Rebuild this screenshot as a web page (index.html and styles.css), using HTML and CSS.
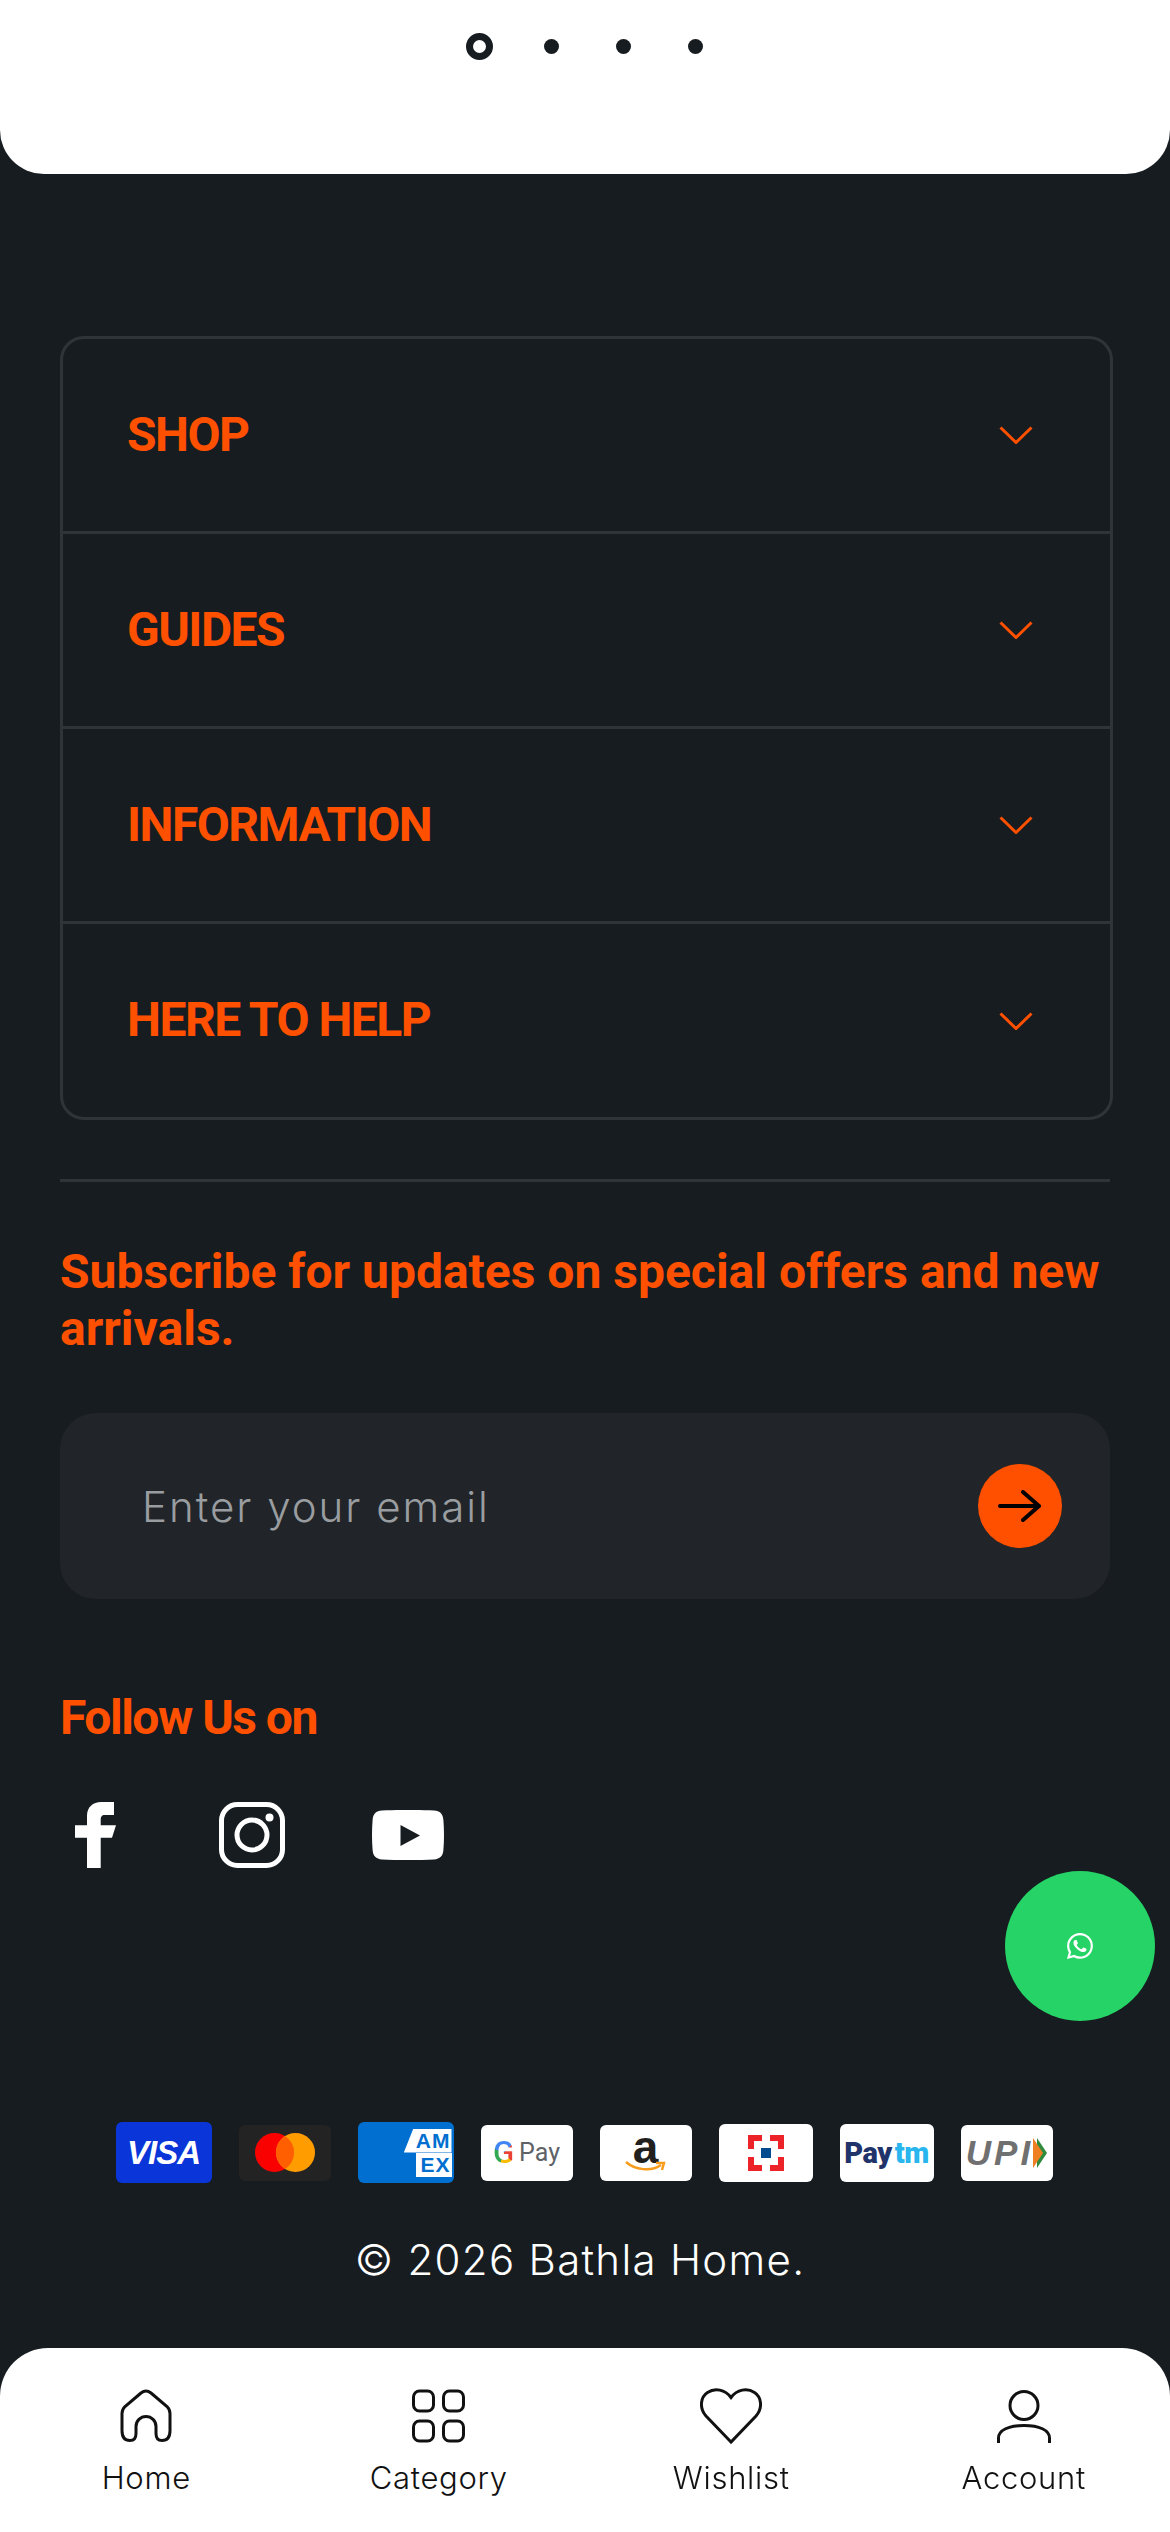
FILE: index.html
```html
<!DOCTYPE html>
<html lang="en">
<head>
    <meta charset="UTF-8">
    <meta name="viewport" content="width=device-width, initial-scale=1.0">
    <title>Bathla Home</title>
    <link rel="stylesheet" href="styles.css">
</head>
<body>

<!-- end of the white slider block -->
<div class="hero">
    <ul class="dots">
        <li class="active"><span></span></li>
        <li><span></span></li>
        <li><span></span></li>
        <li><span></span></li>
    </ul>
</div>

<footer class="footer">
    <div class="accordion">
        <div class="acc-row">
            <span>SHOP</span>
            <svg class="chev" viewBox="0 0 34 18"><path d="M1.5 1.5 L17 16.5 L32.5 1.5"/></svg>
        </div>
        <div class="acc-row">
            <span>GUIDES</span>
            <svg class="chev" viewBox="0 0 34 18"><path d="M1.5 1.5 L17 16.5 L32.5 1.5"/></svg>
        </div>
        <div class="acc-row">
            <span>INFORMATION</span>
            <svg class="chev" viewBox="0 0 34 18"><path d="M1.5 1.5 L17 16.5 L32.5 1.5"/></svg>
        </div>
        <div class="acc-row">
            <span>HERE TO HELP</span>
            <svg class="chev" viewBox="0 0 34 18"><path d="M1.5 1.5 L17 16.5 L32.5 1.5"/></svg>
        </div>
    </div>

    <div class="subscribe">
        <h3>Subscribe for updates on special offers and new arrivals.</h3>
        <div class="email-box">
            <span class="placeholder">Enter your email</span>
            <button class="send">
                <svg viewBox="0 0 44 32" width="44" height="32"><path d="M2 16 H41 M25 2 L41 16 L25 30"/></svg>
            </button>
        </div>
    </div>

    <div class="follow">
        <h3>Follow Us on</h3>
        <div class="socials">
            <svg class="fb" viewBox="0 0 41 66" width="41" height="66"><path d="M12 66 V35.7 H0 V23.3 H12 V14 C12 5 18 0 26 0 H39 V13 H30 C26.5 13 25.7 15 25.7 18 V23.3 H41 L37 35.7 H25.7 V66 Z"/></svg>
            <svg class="ig" viewBox="0 0 66 66" width="66" height="66">
                <rect x="2.5" y="2.5" width="61" height="61" rx="16"/>
                <circle cx="33" cy="33" r="15"/>
                <circle class="ig-dot" cx="50.5" cy="15.5" r="4"/>
            </svg>
            <svg class="yt" viewBox="0 0 72 50" width="72" height="50"><path fill-rule="evenodd" d="M10 0.5 C25 -0.2 47 -0.2 62 0.5 C68 0.8 71 4 71.4 10 C72.2 20 72.2 30 71.4 40 C71 46 68 49 62 49.4 C47 50.2 25 50.2 10 49.4 C4 49 1 46 0.6 40 C-0.2 30 -0.2 20 0.6 10 C1 4 4 0.8 10 0.5 Z M28.500 15 V36 L48 25.500 Z"/></svg>
        </div>
    </div>

    <div class="payments">
        <div class="pay big visa">VISA</div>
        <div class="pay mc">
            <svg viewBox="0 0 60 39" width="60" height="39">
                <circle cx="19.500" cy="19.500" r="19.500" fill="#f90101"/>
                <circle cx="40.500" cy="19.500" r="19.500" fill="#ff9c00"/>
                <path d="M30 3 A19.500 19.500 0 0 1 30 36 A19.500 19.500 0 0 1 30 3 Z" fill="#ff5f00"/>
            </svg>
        </div>
        <div class="pay big amex">
            <div class="amex-mark"><span class="am">AM</span><span class="ex">EX</span></div>
        </div>
        <div class="pay white gpay"><span class="g">G</span><span class="gp">Pay</span></div>
        <div class="pay white amazon">
            <span>a</span>
            <svg viewBox="0 0 42 14" width="42" height="14"><path d="M1 2 C10 10 26 12 36 5"/><path d="M31 3 L39 3 L37 10"/></svg>
        </div>
        <div class="pay white mid">
            <svg viewBox="0 0 36 36" width="36" height="36">
                <path fill="#ed232a" d="M0 0 H14 V6 H6 V14 H0 Z M22 0 H36 V14 H30 V6 H22 Z M0 22 H6 V30 H14 V36 H0 Z M30 22 H36 V36 H22 V30 H30 Z"/>
                <rect x="13" y="13" width="10" height="10" fill="#004c8f"/>
            </svg>
        </div>
        <div class="pay white mid paytm"><span class="p1">Pay</span><span class="p2">tm</span></div>
        <div class="pay white upi">
            <span>UPI</span>
            <svg viewBox="0 0 14 30" width="14" height="30">
                <path fill="#2e8b3d" d="M4 0 L14 15 L4 30 Z"/>
                <path fill="#ee7f22" d="M0 0 L10 15 L0 30 Z"/>
            </svg>
        </div>
    </div>

    <p class="copy">© 2026 Bathla Home.</p>
</footer>

<!-- floating whatsapp button -->
<a class="wa">
    <svg viewBox="0 0 16 16" width="26" height="26"><path d="M13.601 2.326A7.854 7.854 0 0 0 7.994 0C3.627 0 .068 3.558.064 7.926c0 1.399.366 2.76 1.057 3.965L0 16l4.204-1.102a7.933 7.933 0 0 0 3.79.965h.004c4.368 0 7.926-3.558 7.93-7.93A7.898 7.898 0 0 0 13.6 2.326zM7.994 14.521a6.573 6.573 0 0 1-3.356-.92l-.24-.144-2.494.654.666-2.433-.156-.251a6.56 6.56 0 0 1-1.007-3.505c0-3.626 2.957-6.584 6.591-6.584a6.56 6.56 0 0 1 4.66 1.931 6.557 6.557 0 0 1 1.928 4.66c-.004 3.639-2.961 6.592-6.592 6.592zm3.615-4.934c-.197-.099-1.17-.578-1.353-.646-.182-.065-.315-.099-.445.099-.133.197-.513.646-.627.775-.114.133-.232.148-.43.05-.197-.1-.836-.308-1.592-.985-.59-.525-.985-1.175-1.103-1.372-.114-.198-.011-.304.088-.403.087-.088.197-.232.296-.346.1-.114.133-.198.198-.33.065-.134.034-.248-.015-.347-.05-.099-.445-1.076-.612-1.47-.16-.389-.323-.335-.445-.34-.114-.007-.247-.007-.38-.007a.729.729 0 0 0-.529.247c-.182.198-.691.677-.691 1.654 0 .977.71 1.916.81 2.049.098.133 1.394 2.132 3.383 2.992.47.205.84.326 1.129.418.475.152.904.129 1.246.08.38-.058 1.171-.48 1.338-.943.164-.464.164-.86.114-.943-.049-.084-.182-.133-.38-.232z"/></svg>
</a>

<nav class="bottom-nav">
    <a class="nav-item">
        <svg viewBox="0 0 52 53" width="52" height="53"><path d="M21 3.500 L5 17 Q2 20 2 24 V41 Q2 51 10 51 Q16 51 16 44 V37 A10 10 0 0 1 36 37 V44 Q36 51 42 51 Q50 51 50 41 V24 Q50 20 47 17 L31 3.500 Q26 -0.500 21 3.500 Z"/></svg>
        <span>Home</span>
    </a>
    <a class="nav-item">
        <svg viewBox="0 0 53 53" width="53" height="53">
            <rect x="1.500" y="1.500" width="20" height="20" rx="6"/>
            <rect x="31.500" y="1.500" width="20" height="20" rx="6"/>
            <rect x="1.500" y="31.500" width="20" height="20" rx="6"/>
            <rect x="31.500" y="31.500" width="20" height="20" rx="6"/>
        </svg>
        <span>Category</span>
    </a>
    <a class="nav-item">
        <svg viewBox="0 0 62 56" width="62" height="56"><path d="M31 54 L6 28 C-1 20 0.500 9 7.500 4.500 C15 -0.500 25 1.500 31 9.500 C37 1.500 47 -0.500 54.500 4.500 C61.500 9 63 20 56 28 Z"/></svg>
        <span>Wishlist</span>
    </a>
    <a class="nav-item">
        <svg viewBox="0 0 54 54" width="54" height="54">
            <circle cx="27" cy="16.500" r="14"/>
            <path d="M1.500 54 V49 C1.500 41 12 36.500 27 36.500 C42 36.500 52.500 41 52.500 49 V54"/>
        </svg>
        <span>Account</span>
    </a>
</nav>

</body>
</html>
```

FILE: styles.css
```css
* {
    box-sizing: border-box;
}
html, body {
    margin: 0;
    padding: 0;
}
body {
    width: 1170px;
    height: 2532px;
    overflow: hidden;
    background-color: #171c20;
    font-family: "Roboto", "Liberation Sans", sans-serif;
}

/* slider end */
.hero {
    height: 174px;
    padding-top: 33px;
    background-color: #ffffff;
    border-radius: 0 0 44px 44px;
}
.dots {
    display: flex;
    justify-content: center;
    margin: 0;
    padding: 0 0 0 4px;
    list-style: none;
}
.dots li {
    width: 72px;
    height: 27px;
    display: flex;
    align-items: center;
    justify-content: center;
}
.dots span {
    display: block;
    width: 15px;
    height: 15px;
    border-radius: 50%;
    background-color: #171c20;
}
.dots .active span {
    width: 27px;
    height: 27px;
    background-color: #ffffff;
    border: 7px solid #171c20;
}

/* footer */
.footer {
    padding: 162px 60px 0;
}
.accordion {
    width: 1053px;
    border: 3px solid #2f3439;
    border-radius: 24px;
}
.acc-row {
    height: 195px;
    padding: 0 77px 0 64px;
    display: flex;
    align-items: center;
    justify-content: space-between;
    color: #ff5000;
    font-size: 48px;
    font-weight: 700;
    letter-spacing: -1.5px;
    border-bottom: 3px solid #2f3439;
}
.acc-row:last-child {
    border-bottom: none;
    height: 193px;
}
.acc-row span {
    margin-top: -2px;
}
.chev {
    width: 34px;
    height: 18px;
    fill: none;
    stroke: #ff5000;
    stroke-width: 3;
}

.subscribe {
    margin-top: 59px;
    padding-top: 0;
    border-top: 3px solid #2f3439;
}
.subscribe h3 {
    margin: 61px 0 0;
    color: #ff5000;
    font-size: 48px;
    line-height: 57px;
    font-weight: 700;
}
.email-box {
    height: 186px;
    margin-top: 56px;
    padding: 0 48px 0 82px;
    display: flex;
    align-items: center;
    justify-content: space-between;
    background-color: #212529;
    border-radius: 36px;
}
.placeholder {
    color: #9a9da0;
    font-family: "Inter", "Liberation Sans", sans-serif;
    font-size: 42px;
    font-weight: 300;
    letter-spacing: 2px;
}
.send {
    width: 84px;
    height: 84px;
    padding: 0;
    border: none;
    border-radius: 50%;
    background-color: #ff5000;
    display: flex;
    align-items: center;
    justify-content: center;
}
.send svg {
    fill: none;
    stroke: #000000;
    stroke-width: 4;
    stroke-linecap: round;
    stroke-linejoin: round;
}

.follow {
    margin-top: 90px;
}
.follow h3 {
    margin: 0;
    color: #ff5000;
    font-size: 48px;
    line-height: 57px;
    font-weight: 700;
    letter-spacing: -1.5px;
}
.socials {
    margin-top: 56px;
    padding-left: 15px;
    display: flex;
    align-items: center;
}
.socials svg {
    display: block;
}
.fb {
    fill: #ffffff;
}
.ig {
    margin-left: 103px;
    fill: none;
    stroke: #ffffff;
    stroke-width: 5;
}
.ig .ig-dot {
    fill: #ffffff;
    stroke: none;
}
.yt {
    margin-left: 87px;
    fill: #ffffff;
}

/* payment cards */
.payments {
    margin: 254px -60px 0;
    padding-right: 2px;
    display: flex;
    align-items: center;
    justify-content: center;
    gap: 27px;
}
.pay {
    width: 92px;
    height: 56px;
    border-radius: 6px;
    display: flex;
    align-items: center;
    justify-content: center;
}
.pay.big {
    width: 96px;
    height: 61px;
}
.pay.mid {
    width: 94px;
    height: 58px;
}
.white {
    background-color: #ffffff;
}
.visa {
    background-color: #0a35d8;
    color: #ffffff;
    font-family: "Liberation Sans", sans-serif;
    font-size: 33px;
    font-weight: 700;
    font-style: italic;
    letter-spacing: -1px;
}
.mc {
    background-color: #232323;
}
.amex {
    background-color: #016fd0;
    justify-content: flex-end;
    padding-right: 2px;
}
.amex-mark {
    display: flex;
    flex-direction: column;
    align-items: flex-end;
    font-family: "Liberation Sans", sans-serif;
    font-weight: 700;
    color: #016fd0;
}
.am, .ex {
    display: block;
    height: 24px;
    line-height: 24px;
    background-color: #ffffff;
    font-size: 21px;
    letter-spacing: 1px;
}
.am {
    padding: 0 1px 0 12px;
    clip-path: polygon(20% 0, 100% 0, 100% 100%, 0 100%);
}
.ex {
    padding: 0 1px 0 4px;
}
.gpay {
    gap: 5px;
}
.g {
    font-size: 31px;
    font-weight: 500;
    line-height: 36px;
    color: transparent;
    background: conic-gradient(from 45deg, #ea4335 0 90deg, #fbbc05 90deg 150deg, #34a853 150deg 250deg, #4285f4 250deg 360deg);
    -webkit-background-clip: text;
    background-clip: text;
}
.gp {
    font-size: 25px;
    color: #5f6368;
}
.amazon {
    flex-direction: column;
}
.amazon span {
    font-family: "Liberation Sans", sans-serif;
    font-size: 46px;
    font-weight: 700;
    line-height: 32px;
    color: #221f1f;
}
.amazon svg {
    margin-top: -3px;
    fill: none;
    stroke: #f79c1c;
    stroke-width: 2.500;
}
.paytm {
    font-size: 29px;
    font-weight: 900;
    letter-spacing: -0.5px;
}
.p1 {
    color: #20336b;
}
.p2 {
    color: #29b6ee;
    margin-left: 3px;
}
.upi {
    gap: 0;
    font-family: "Liberation Sans", sans-serif;
    font-size: 35px;
    font-weight: 700;
    font-style: italic;
    letter-spacing: 3px;
    color: #707070;
}

.copy {
    margin: 52px 0 0;
    padding-right: 10px;
    color: #ffffff;
    text-align: center;
    font-family: "Inter", "Liberation Sans", sans-serif;
    font-size: 42px;
    line-height: 50px;
    font-weight: 300;
    letter-spacing: 1.3px;
}

/* floating button */
.wa {
    position: fixed;
    left: 1005px;
    top: 1871px;
    width: 150px;
    height: 150px;
    border-radius: 50%;
    background-color: #25d366;
    display: flex;
    align-items: center;
    justify-content: center;
    fill: #ffffff;
}

/* bottom bar */
.bottom-nav {
    position: fixed;
    left: 0;
    bottom: 0;
    width: 1170px;
    height: 184px;
    padding-top: 39px;
    display: grid;
    grid-template-columns: repeat(4, 1fr);
    background-color: #ffffff;
    border-radius: 48px 48px 0 0;
}
.nav-item {
    display: flex;
    flex-direction: column;
    align-items: center;
    color: #111111;
    font-family: "Inter", "Liberation Sans", sans-serif;
    font-size: 31px;
    font-weight: 300;
    letter-spacing: 0.7px;
}
.nav-item svg {
    height: 58px;
    fill: none;
    stroke: #111111;
    stroke-width: 3;
}
.nav-item span {
    margin-top: 14px;
    line-height: 38px;
}
```
